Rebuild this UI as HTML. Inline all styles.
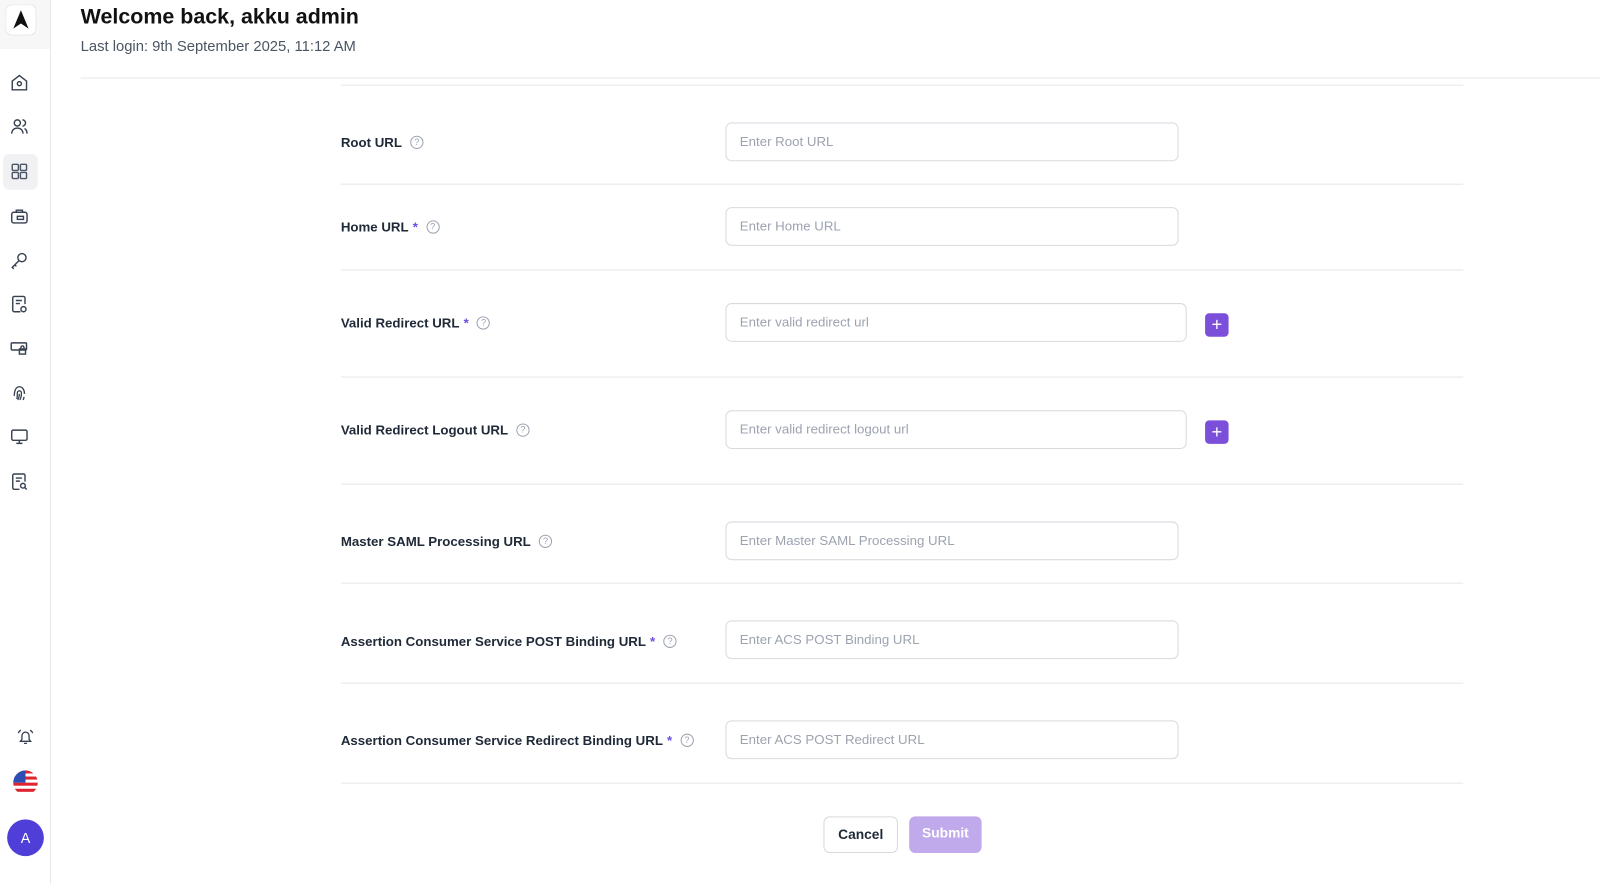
<!DOCTYPE html>
<html><head><meta charset="utf-8"><style>
*{margin:0;padding:0;box-sizing:border-box}
body{width:1600px;height:866px;background:#fff;font-family:"Liberation Sans",sans-serif;position:relative;overflow:hidden;color:#111827}
#w{position:absolute;left:0;top:0;width:1568px;height:849px;transform:scale(1.0204);transform-origin:0 0}
.sb{position:absolute;left:0;top:0;width:50px;height:866px;border-right:1px solid #e5e7eb;background:#fff}
.logo{position:absolute;left:0;top:0;width:49px;height:48px;background:#f7f7f8}
.logo div{position:absolute;left:6px;top:5px;width:29px;height:29px;background:#fff;border-radius:6px;box-shadow:0 0 1px #ccc}
.ic{position:absolute;left:9px;width:20px;height:20px}
.act{position:absolute;left:3px;top:151px;width:34px;height:35px;background:#f1f1f4;border-radius:6px}
h1{position:absolute;left:79px;top:5px;font-size:21px;font-weight:bold;color:#111}
.sub{position:absolute;left:79px;top:38px;font-size:14.5px;color:#4b5563}
.hl{position:absolute;left:79px;top:76px;width:1489px;height:1px;background:#e5e7eb}
.line{position:absolute;left:334px;width:1100px;height:1px;background:#e5e7eb}
.lab{position:absolute;left:334px;font-size:13px;font-weight:bold;color:#1f2937;display:flex;align-items:center;height:20px}
.lab .s{color:#6d4ee0;margin-left:4px}
.q{display:inline-block;width:13px;height:13px;border:1.2px solid #9ca3af;border-radius:50%;margin-left:8px;font-size:9px;color:#9ca3af;text-align:center;line-height:11px;font-weight:normal}
.in{position:absolute;left:711px;width:444px;height:38px;border:1px solid #d9d9e0;border-radius:6px;font-size:13px;color:#9ca3af;padding-left:13px;line-height:36px}
.plus{position:absolute;left:1181px;width:23px;height:23px;background:#7b4fd9;border-radius:4px;color:#fff;font-size:18px;text-align:center;line-height:22px}
.btn{position:absolute;top:800px;height:36px;border-radius:6px;font-size:13.5px;font-weight:bold;text-align:center;line-height:34px}
</style></head><body><div id="w">
<div class="sb">
<div class="logo"><div><svg width="29" height="29" viewBox="0 0 29 29"><path d="M14.5 5 L22 23 L14.5 18 L7 23 Z" fill="#111"/></svg></div></div>
<div class="act"></div>
<svg class="ic" style="top:71px" viewBox="0 0 20 20" fill="none" stroke="#374151" stroke-width="1.4"><path d="M3 8.5L10 3l7 5.5V17H3z"/><circle cx="10" cy="11" r="2"/></svg>
<svg class="ic" style="top:114px" viewBox="0 0 20 20" fill="none" stroke="#374151" stroke-width="1.4"><circle cx="8" cy="6.5" r="3"/><path d="M2.5 17c0-3.5 2.5-5.5 5.5-5.5s5.5 2 5.5 5.5M13 3.5a3 3 0 010 6M15 12c1.5.7 2.5 2.5 2.5 5"/></svg>
<svg class="ic" style="top:158px" viewBox="0 0 20 20" fill="none" stroke="#4b5563" stroke-width="1.4"><rect x="3" y="3" width="6" height="6" rx="1"/><rect x="11" y="3" width="6" height="6" rx="1"/><rect x="3" y="11" width="6" height="6" rx="1"/><rect x="11" y="11" width="6" height="6" rx="1"/></svg>
<svg class="ic" style="top:202px" viewBox="0 0 20 20" fill="none" stroke="#374151" stroke-width="1.4"><rect x="2.5" y="6" width="15" height="10.5" rx="2"/><path d="M7 6V4h6v2"/><rect x="8" y="10" width="6" height="3"/></svg>
<svg class="ic" style="top:245px" viewBox="0 0 20 20" fill="none" stroke="#374151" stroke-width="1.4"><circle cx="12.5" cy="7.5" r="4"/><path d="M9.5 10.5L3 17l1.5 1.5M5.5 14.5l1.5 1.5"/></svg>
<svg class="ic" style="top:288px" viewBox="0 0 20 20" fill="none" stroke="#374151" stroke-width="1.4"><path d="M11 17.5H5a1.5 1.5 0 01-1.5-1.5V4A1.5 1.5 0 015 2.5h9A1.5 1.5 0 0115.5 4v6"/><path d="M6.5 6.5h6M6.5 9.5h4"/><circle cx="14" cy="15" r="2.5"/></svg>
<svg class="ic" style="top:331px" viewBox="0 0 20 20" fill="none" stroke="#374151" stroke-width="1.4"><rect x="2" y="5" width="15" height="7" rx="1"/><rect x="10" y="11" width="6" height="5"/><path d="M11.5 11V9.5a1.5 1.5 0 013 0V11"/></svg>
<svg class="ic" style="top:375px" viewBox="0 0 20 20" fill="none" stroke="#374151" stroke-width="1.3"><path d="M5 13c0-6 2-9 5-9s5 3 5 7M7.5 16c.5-2 .5-4 .5-6a2 2 0 014 0c0 3-.5 5-1.5 7M10 11c0 2-.5 4-1.5 6M14.5 14c0 1-.3 2-.8 3"/></svg>
<svg class="ic" style="top:418px" viewBox="0 0 20 20" fill="none" stroke="#374151" stroke-width="1.4"><rect x="2.5" y="3.5" width="15" height="10" rx="1.5"/><path d="M10 13.5v3M7 16.5h6"/></svg>
<svg class="ic" style="top:462px" viewBox="0 0 20 20" fill="none" stroke="#374151" stroke-width="1.4"><path d="M10 17.5H5a1.5 1.5 0 01-1.5-1.5V4A1.5 1.5 0 015 2.5h9A1.5 1.5 0 0115.5 4v6"/><path d="M6.5 6.5h6M6.5 9.5h4"/><circle cx="13.5" cy="14" r="2.3"/><path d="M15.2 15.7l2 2"/></svg>
<svg class="ic" style="top:712px;left:15px" viewBox="0 0 20 20" fill="none" stroke="#374151" stroke-width="1.3"><path d="M5 14.5h10l-1.5-2V9a3.5 3.5 0 00-7 0v3.5z M8.5 16.5h3M3 6.5c.5-1.5 1.5-2.5 2.5-3M17 6.5c-.5-1.5-1.5-2.5-2.5-3"/></svg>
<svg style="position:absolute;left:12px;top:754px" width="26" height="26" viewBox="0 0 26 26"><defs><clipPath id="c"><circle cx="13" cy="13" r="12"/></clipPath></defs><g clip-path="url(#c)"><rect width="26" height="26" fill="#fff"/><rect y="1" width="26" height="3" fill="#e0242f"/><rect y="7" width="26" height="3" fill="#e0242f"/><rect y="13" width="26" height="3" fill="#e0242f"/><rect y="19" width="26" height="3" fill="#e0242f"/><rect y="25" width="26" height="3" fill="#e0242f"/><rect width="13" height="13" fill="#2d4fb3"/></g></svg>
<div style="position:absolute;left:7px;top:803px;width:36px;height:36px;border-radius:50%;background:#4f3fd8;color:#fff;text-align:center;line-height:36px;font-size:14px">A</div>
</div>
<h1>Welcome back, akku admin</h1>
<div class="sub">Last login: 9th September 2025, 11:12 AM</div>
<div class="hl"></div>
<div class="line" style="top:83px"></div>
<div class="lab" style="top:129px">Root URL<span class="q">?</span></div>
<div class="in" style="top:120px">Enter Root URL</div>
<div class="line" style="top:180px"></div>
<div class="lab" style="top:212px">Home URL<span class="s">*</span><span class="q">?</span></div>
<div class="in" style="top:203px">Enter Home URL</div>
<div class="line" style="top:264px"></div>
<div class="lab" style="top:306px">Valid Redirect URL<span class="s">*</span><span class="q">?</span></div>
<div class="in" style="top:297px;width:452px">Enter valid redirect url</div>
<div class="plus" style="top:307px">+</div>
<div class="line" style="top:369px"></div>
<div class="lab" style="top:411px">Valid Redirect Logout URL<span class="q">?</span></div>
<div class="in" style="top:402px;width:452px">Enter valid redirect logout url</div>
<div class="plus" style="top:412px">+</div>
<div class="line" style="top:474px"></div>
<div class="lab" style="top:520px">Master SAML Processing URL<span class="q">?</span></div>
<div class="in" style="top:511px">Enter Master SAML Processing URL</div>
<div class="line" style="top:571px"></div>
<div class="lab" style="top:618px">Assertion Consumer Service POST Binding URL<span class="s">*</span><span class="q">?</span></div>
<div class="in" style="top:608px">Enter ACS POST Binding URL</div>
<div class="line" style="top:669px"></div>
<div class="lab" style="top:715px">Assertion Consumer Service Redirect Binding URL<span class="s">*</span><span class="q">?</span></div>
<div class="in" style="top:706px">Enter ACS POST Redirect URL</div>
<div class="line" style="top:767px"></div>
<div class="btn" style="left:807px;width:73px;border:1px solid #d9d9e0;color:#1f2937">Cancel</div>
<div class="btn" style="left:891px;width:71px;background:#c0aaeb;color:#fff">Submit</div>
</div></body></html>
